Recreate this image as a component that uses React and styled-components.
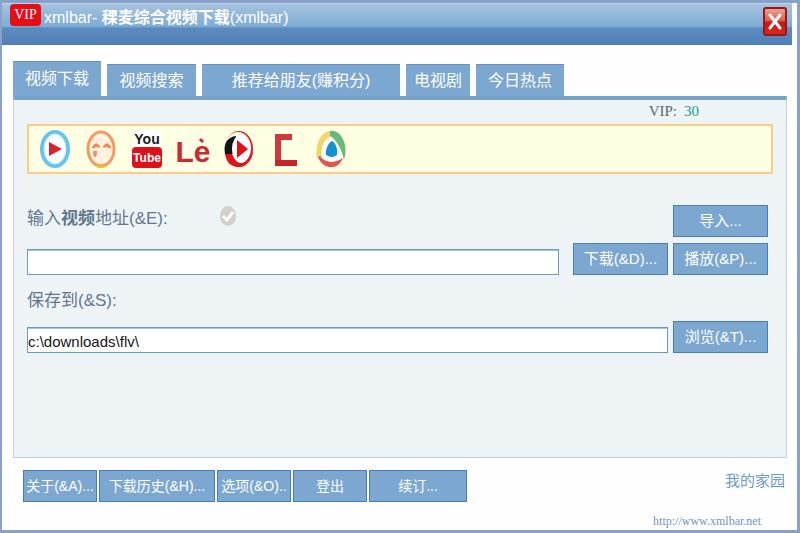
import React from "react";
import styled, { createGlobalStyle } from "styled-components";

const sans = '"Liberation Sans", "Noto Sans CJK SC", sans-serif';
const serif = '"Liberation Serif", "Noto Sans CJK SC", serif';

const GlobalStyle = createGlobalStyle`
  * { box-sizing: border-box; }
  body { margin: 0; font-family: ${sans}; background: #fff; }
  button, input { font-family: inherit; margin: 0; }
`;

const Window = styled.div`
  min-height: 100vh;
  display: flex;
  flex-direction: column;
  background: #fefefe;
  border: solid #87a1cb;
  border-width: 3px 3px 3px 2px;
`;

const TitleBar = styled.header`
  display: flex;
  align-items: flex-start;
  gap: 3px;
  height: 42px;
  margin-right: 5px;
  padding: 0 5px 0 8px;
  border-top: 1px solid #bdd3e7;
  border-bottom: 1px solid #4a7db8;
  background: linear-gradient(#a5c3df 0%, #7fabd3 56%, #5b8cc0 60%, #5280b7 100%);
`;

const VipBadge = styled.span`
  height: 22px;
  width: 31px;
  border-radius: 4px;
  background: #e60d17;
  color: #fff;
  text-align: center;
  font: 14px/22px ${serif};
`;

const Title = styled.h1`
  flex: 1;
  margin: 0;
  color: #fff;
  font-size: 16px;
  font-weight: 400;
  line-height: 28px;
`;

const CloseButton = styled.button`
  width: 24px;
  height: 29px;
  margin-top: 3px;
  padding: 0;
  display: grid;
  place-items: center;
  border: 2px solid #9c1712;
  border-radius: 3px;
  background: linear-gradient(#eda092 0%, #dd5f50 45%, #c41710 55%, #d92a1d 100%);
`;

const TabList = styled.nav`
  display: flex;
  align-items: flex-end;
  gap: 6px;
  margin: 16px 10px 0 11px;
`;

const Tab = styled.button`
  height: ${(p) => (p.$active ? 35 : 32)}px;
  width: ${(p) => p.$width}px;
  padding: 0;
  border: 0;
  border-top: 1px solid #6592c2;
  background: #7ca7d0;
  color: #fff;
  font-size: 16px;
  line-height: 30px;
  white-space: nowrap;
`;

const Panel = styled.main`
  flex: 1;
  margin: 0 10px 0 11px;
  padding: 0 13px;
  border: 1px solid #c2cfdf;
  border-top: 4px solid #78a3cd;
  background: #eef4f6;
`;

const Points = styled.div`
  display: flex;
  justify-content: flex-end;
  gap: 7px;
  padding: 0 74px 2px 0;
  color: #5b6670;
  font: 15px/22px ${serif};
`;

const PointsValue = styled.span`
  color: #209a94;
`;

const SiteBar = styled.div`
  display: flex;
  align-items: center;
  gap: 16px;
  height: 50px;
  padding: 0 11px;
  border: 2px solid #fbcd86;
  background: #ffffe3;
`;

const SiteButton = styled.button`
  display: flex;
  padding: 0;
  border: 0;
  background: none;
`;

const Row = styled.div`
  display: flex;
  align-items: ${(p) => p.$align || "flex-end"};
  gap: 5px;
  margin-top: ${(p) => p.$top}px;
  margin-right: 5px;
`;

const FieldLabel = styled.label`
  display: block;
  min-width: 187px;
  color: #61778e;
  font-size: 17px;
  line-height: 28px;
`;

const SaveLabel = styled(FieldLabel)`
  margin-top: 12px;
`;

const TextInput = styled.input`
  flex: 1;
  min-width: 0;
  height: 26px;
  margin-right: ${(p) => p.$gap || 0}px;
  padding: 2px 0 0;
  border: 1px solid #7298bf;
  box-shadow: inset 0 1px #a9c1d9;
  background: #fff;
  color: #151515;
  font-size: 15px;
`;

const Spacer = styled.span`
  flex: 1;
`;

const Button = styled.button`
  flex: none;
  width: ${(p) => p.$width || 95}px;
  height: 32px;
  padding: 0;
  border: 1px solid #4a7cb9;
  background: #7ca7d0;
  color: #fff;
  font-size: 15px;
  line-height: 28px;
  white-space: nowrap;
`;

const FooterButton = styled(Button)`
  font-size: 14px;
`;

const Footer = styled.footer`
  display: flex;
  justify-content: space-between;
  align-items: flex-start;
  margin: 12px 12px 0 21px;
`;

const Actions = styled.div`
  display: flex;
  gap: 2px;
`;

const HomeLink = styled.a`
  color: #6e9ac4;
  font-size: 15px;
  line-height: 22px;
  text-decoration: none;
`;

const SiteLink = styled.a`
  align-self: flex-end;
  margin: 10px 36px 0 0;
  color: #7196be;
  font: 12px/18px ${serif};
  text-decoration: none;
`;

const LogoArt = styled.svg`
  overflow: visible;
`;

function Logo({ children }) {
  return (
    <LogoArt width="30" height="40" viewBox="0 0 30 40" aria-hidden="true">
      {children}
    </LogoArt>
  );
}

const sites = [
  {
    name: "Youku",
    art: (
      <>
        <ellipse cx="15" cy="20" rx="13" ry="17" fill="#fff" stroke="#65c4ea" strokeWidth="4" />
        <ellipse cx="15" cy="20" rx="11" ry="15" fill="none" stroke="#c4e9f8" strokeWidth="1" />
        <path d="M9 13 L22 20 L9 27 Z" fill="#d8232f" />
      </>
    ),
  },
  {
    name: "Tudou",
    art: (
      <>
        <ellipse cx="15" cy="20" rx="13" ry="17" fill="#fff3e0" stroke="#f29a62" strokeWidth="3" />
        <path d="M6 19 Q10 11 14 18 Q10 17 6 19 Z M17 18 Q21 11 25 19 Q21 17 17 18 Z" fill="#f08a4c" stroke="#f08a4c" />
        <path d="M7 22 h4 q0 6 -2 6 q-2 0 -2 -6" fill="#ef9162" />
        <path d="M10 37 Q15 39 20 37" stroke="#f3c321" strokeWidth="2" fill="none" />
      </>
    ),
  },
  {
    name: "YouTube",
    art: (
      <>
        <rect x="2" y="1" width="26" height="18" fill="#fff" />
        <text x="15" y="15" textAnchor="middle" fill="#1b1b1b" fontSize="14" fontWeight="700">You</text>
        <rect x="0" y="18" width="30" height="21" rx="4" fill="#df101a" />
        <text x="15" y="33" textAnchor="middle" fill="#fff" fontSize="12" fontWeight="700">Tube</text>
      </>
    ),
  },
  {
    name: "Le",
    art: (
      <>
        <text x="15" y="33" textAnchor="middle" fill="#cb2a35" fontSize="30" fontWeight="700">Le</text>
        <path d="M22 10 L25 13" stroke="#cb2a35" strokeWidth="3" />
      </>
    ),
  },
  {
    name: "Sohu",
    art: (
      <>
        <ellipse cx="15" cy="20" rx="14" ry="18" fill="#d8252b" />
        <ellipse cx="14" cy="19" rx="13" ry="16" fill="#fffbe8" />
        <path d="M1 24 C2 43 27 43 29 22 C25 34 14 38 8 25 Z" fill="#e01218" />
        <path d="M1 25 C-1 14 4 8 12 7 L12 10 C9 14 8 19 9 25 Z" fill="#141414" />
        <ellipse cx="17" cy="20" rx="9" ry="14" fill="#fff" />
        <path d="M13 11 L24 20 L13 29 Z" fill="#e01218" />
      </>
    ),
  },
  {
    name: "CNTV",
    art: (
      <>
        <path d="M22 8 H8 V34" fill="none" stroke="#cf3a3f" strokeWidth="6" />
        <path d="M5 34 H27" stroke="#c9242b" strokeWidth="6" />
      </>
    ),
  },
  {
    name: "PPTV",
    art: (
      <>
        <ellipse cx="15" cy="20" rx="13" ry="17" fill="#fff" />
        <path d="M15 2 C4 2 -1 17 1 29 L6 28 C4 19 8 10 15 7 Z" fill="#f2d567" />
        <path d="M14 2 C26 0 33 18 28 31 C26 22 22 12 14 7 Z" fill="#68bb76" />
        <path d="M2 28 C7 41 22 42 27 29 C20 34 10 35 4 27 Z" fill="#df5550" />
        <path d="M16 12 C20 14 22 21 21 26 Q16 30 10 26 C9 21 12 14 16 12 Z" fill="#1591cf" />
      </>
    ),
  },
];

const tabs = [
  ["视频下载", 88],
  ["视频搜索", 89],
  ["推荐给朋友(赚积分)", 198],
  ["电视剧", 64],
  ["今日热点", 88],
];

const actions = [
  ["关于(&A)...", 74],
  ["下载历史(&H)...", 116],
  ["选项(&O)..", 74],
  ["登出", 74],
  ["续订...", 98],
];

export default function App() {
  return (
    <Window>
      <GlobalStyle />
      <TitleBar>
        <VipBadge>VIP</VipBadge>
        <Title>
          xmlbar- <b>稞麦综合视频下载</b>(xmlbar)
        </Title>
        <CloseButton aria-label="Close">
          <svg width="16" height="19" viewBox="0 0 16 19" aria-hidden="true">
            <path d="M3 3 L13 16 M13 3 L3 16" stroke="#fff" strokeWidth="3" strokeLinecap="round" />
          </svg>
        </CloseButton>
      </TitleBar>

      <TabList>
        {tabs.map(([label, width], i) => (
          <Tab key={label} $width={width} $active={i === 0}>
            {label}
          </Tab>
        ))}
      </TabList>

      <Panel>
        <Points>
          <span>VIP:</span>
          <PointsValue>30</PointsValue>
        </Points>
        <SiteBar>
          {sites.map((site) => (
            <SiteButton key={site.name} aria-label={site.name}>
              <Logo>{site.art}</Logo>
            </SiteButton>
          ))}
        </SiteBar>

        <Row $top={31} $align="flex-start">
          <FieldLabel htmlFor="address">
            输入<b>视频</b>地址(&amp;E):
          </FieldLabel>
          <svg width="18" height="22" viewBox="0 0 18 22" aria-hidden="true">
            <ellipse cx="9" cy="11" rx="8" ry="10" fill="#d3d1c7" />
            <path d="M4 11 L8 15 L14 7" fill="none" stroke="#fff" strokeWidth="3" />
          </svg>
          <Spacer />
          <Button>导入...</Button>
        </Row>
        <Row $top={6}>
          <TextInput id="address" type="text" $gap={9} />
          <Button>下载(&amp;D)...</Button>
          <Button>播放(&amp;P)...</Button>
        </Row>

        <SaveLabel htmlFor="folder">保存到(&amp;S):</SaveLabel>
        <Row $top={6}>
          <TextInput id="folder" type="text" defaultValue="c:\downloads\flv\" />
          <Button>浏览(&amp;T)...</Button>
        </Row>
      </Panel>

      <Footer>
        <Actions>
          {actions.map(([label, width]) => (
            <FooterButton key={label} $width={width}>
              {label}
            </FooterButton>
          ))}
        </Actions>
        <HomeLink href="#home">我的家园</HomeLink>
      </Footer>
      <SiteLink href="http://www.xmlbar.net">http://www.xmlbar.net</SiteLink>
    </Window>
  );
}
